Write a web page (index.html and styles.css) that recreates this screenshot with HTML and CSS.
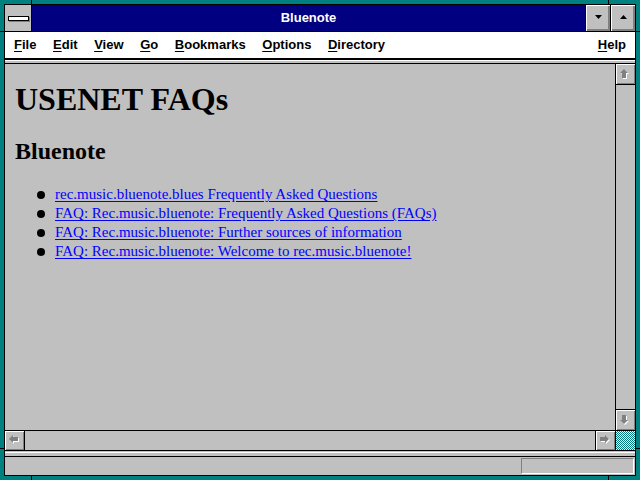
FILE: index.html
```html
<!DOCTYPE html>
<html>
<head>
<meta charset="utf-8">
<title>Bluenote</title>
<link rel="stylesheet" href="styles.css">
</head>
<body>
<div class="window">
  <div class="titlebar">
    <div class="sysbox"><span class="sysbar"></span></div>
    <div class="title">Bluenote</div>
    <div class="tbtn">
      <svg width="9" height="5" viewBox="0 0 9 5"><polygon points="1,0 8,0 4.5,4" fill="#000"/></svg>
    </div>
    <div class="tbtn">
      <svg width="9" height="5" viewBox="0 0 9 5"><polygon points="4.5,0 8,4 1,4" fill="#000"/></svg>
    </div>
  </div>
  <div class="menubar">
    <span class="mi"><u>F</u>ile</span>
    <span class="mi"><u>E</u>dit</span>
    <span class="mi"><u>V</u>iew</span>
    <span class="mi"><u>G</u>o</span>
    <span class="mi"><u>B</u>ookmarks</span>
    <span class="mi"><u>O</u>ptions</span>
    <span class="mi"><u>D</u>irectory</span>
    <span class="mi help"><u>H</u>elp</span>
  </div>
  <div class="sep"></div>
  <div class="main">
    <div class="content">
      <h1>USENET FAQs</h1>
      <h2>Bluenote</h2>
      <ul class="links">
        <li><a href="#">rec.music.bluenote.blues Frequently Asked Questions</a></li>
        <li><a href="#">FAQ: Rec.music.bluenote: Frequently Asked Questions (FAQs)</a></li>
        <li><a href="#">FAQ: Rec.music.bluenote: Further sources of information</a></li>
        <li><a href="#">FAQ: Rec.music.bluenote: Welcome to rec.music.bluenote!</a></li>
      </ul>
    </div>
    <div class="vscroll">
      <div class="sbtn vtop">
        <svg width="11" height="11" viewBox="0 0 11 11"><polygon points="5,1 9,5 7,5 7,10 3,10 3,5 1,5" fill="#fff"/><polygon points="4,0 8,4 6,4 6,9 2,9 2,4 0,4" fill="#808080"/></svg>
      </div>
      <div class="vtrack"></div>
      <div class="sbtn vbot">
        <svg width="11" height="11" viewBox="0 0 11 11"><polygon points="5,10 9,6 7,6 7,1 3,1 3,6 1,6" fill="#fff"/><polygon points="4,9 8,5 6,5 6,0 2,0 2,5 0,5" fill="#808080"/></svg>
      </div>
    </div>
  </div>
  <div class="hscroll">
    <div class="sbtn hleft">
      <svg width="11" height="11" viewBox="0 0 11 11"><polygon points="1,5 5,1 5,3 10,3 10,7 5,7 5,9" fill="#fff"/><polygon points="0,4 4,0 4,2 9,2 9,6 4,6 4,8" fill="#808080"/></svg>
    </div>
    <div class="htrack"></div>
    <div class="sbtn hright">
      <svg width="11" height="11" viewBox="0 0 11 11"><polygon points="10,5 6,1 6,3 1,3 1,7 6,7 6,9" fill="#fff"/><polygon points="9,4 5,0 5,2 0,2 0,6 5,6 5,8" fill="#808080"/></svg>
    </div>
    <div class="corner"></div>
  </div>
  <div class="sep2"></div>
  <div class="status">
    <div class="statbox"></div>
  </div>
</div>
<span class="tick tv t1"></span>
<span class="tick tv t2"></span>
<span class="tick tv t3"></span>
<span class="tick tv t4"></span>
<span class="tick th t5"></span>
<span class="tick th t6"></span>
<span class="tick th t7"></span>
<span class="tick th t8"></span>
</body>
</html>
```
FILE: styles.css
```css
html, body {
  margin: 0;
  padding: 0;
}
body {
  width: 640px;
  height: 480px;
  background: #008080;
  overflow: hidden;
  position: relative;
  font-family: "Liberation Sans", Arial, sans-serif;
}
.window {
  position: absolute;
  left: 4px;
  top: 4px;
  width: 630px;
  height: 470px;
  border: 1px solid #000;
  background: #c0c0c0;
  display: flex;
  flex-direction: column;
}
.titlebar {
  height: 26px;
  border-bottom: 1px solid #000;
  display: flex;
  flex: none;
}
.sysbox {
  width: 26px;
  border-right: 1px solid #000;
  background: #c0c0c0;
  display: flex;
  align-items: center;
  justify-content: center;
}
.sysbar {
  display: block;
  width: 19px;
  height: 3px;
  background: #fff;
  border: 1px solid #000;
  box-shadow: 1px 1px 0 #808080;
  margin-top: 1px;
}
.title {
  flex: 1;
  background: #000080;
  color: #fff;
  font-weight: bold;
  font-size: 13px;
  line-height: 26px;
  text-align: center;
}
.tbtn {
  width: 24px;
  border-left: 1px solid #000;
  background: #c0c0c0;
  box-shadow: inset 1px 1px 0 #fff, inset -2px -2px 0 #808080;
  display: flex;
  align-items: center;
  justify-content: center;
}
.tbtn svg { display: block; margin-top: -1px; }
.menubar {
  height: 26px;
  flex: none;
  background: #fff;
  border-bottom: 2px solid #000;
  display: flex;
  align-items: center;
  gap: 16.6px;
  padding: 0 9px;
  font-size: 13px;
  font-weight: bold;
  line-height: 26px;
  color: #000;
}
.mi u { text-underline-offset: 2px; }
.help { margin-left: auto; }
.sep {
  flex: none;
  height: 2px;
  border-top: 1px solid #fff;
  border-bottom: 1px solid #000;
  background: #c0c0c0;
}
.main {
  flex: 1;
  display: flex;
  min-height: 0;
}
.content {
  flex: 1;
  padding: 0 10px;
  overflow: hidden;
  font-family: "Liberation Serif", "Times New Roman", serif;
  color: #000;
}
.content h1 {
  margin: 17px 0 0;
  font-size: 32px;
  line-height: 37px;
  font-weight: bold;
}
.content h2 {
  margin: 19px 0 0;
  font-size: 24px;
  line-height: 28px;
  font-weight: bold;
}
.links {
  list-style: none;
  margin: 20px 0 0;
  padding: 0 0 0 22px;
  font-size: 15px;
  line-height: 19px;
}
.links li {
  display: flex;
}
.links li::before {
  content: "";
  flex: none;
  width: 8px;
  height: 8px;
  border-radius: 50%;
  background: #000;
  margin: 6px 10px 0 0;
}
.links a {
  color: #0000ff;
  text-decoration: underline;
  text-underline-offset: 2px;
}
.vscroll {
  width: 19px;
  border-left: 1px solid #000;
  display: flex;
  flex-direction: column;
}
.sbtn {
  background: #c0c0c0;
  box-shadow: inset 1px 1px 0 #fff, inset -1px -1px 0 #808080;
  display: flex;
  align-items: center;
  justify-content: center;
  flex: none;
}
.vtop { height: 20px; border-bottom: 1px solid #000; }
.vbot { height: 20px; border-top: 1px solid #000; }
.vtrack { flex: 1; background: #c0c0c0; }
.hscroll {
  flex: none;
  height: 19px;
  border-top: 1px solid #000;
  border-bottom: 1px solid #000;
  display: flex;
}
.hleft { width: 19px; border-right: 1px solid #000; }
.htrack { flex: 1; background: #c0c0c0; }
.hright { width: 19px; border-left: 1px solid #000; }
.corner {
  width: 19px;
  border-left: 1px solid #000;
  background: repeating-conic-gradient(#008080 0 25%, #ffffff 0 50%) 0 0 / 2px 2px;
}
.sep2 {
  flex: none;
  height: 5px;
  border-bottom: 1px solid #000;
  background: linear-gradient(#c0c0c0 0 1px, #fff 1px 2px, #c0c0c0 2px);
}
.status {
  flex: none;
  height: 18px;
  display: flex;
  justify-content: flex-end;
  align-items: center;
  padding-right: 1px;
}
.statbox {
  width: 111px;
  height: 14px;
  border-top: 1px solid #808080;
  border-left: 1px solid #808080;
  border-bottom: 1px solid #fff;
  border-right: 1px solid #fff;
}
.tick {
  position: absolute;
  background: #000;
}
.tv { width: 1px; height: 4px; }
.th { width: 4px; height: 1px; }
.t1 { left: 31px; top: 0; }
.t2 { left: 608px; top: 0; }
.t3 { left: 31px; top: 476px; }
.t4 { left: 608px; top: 476px; }
.t5 { left: 0; top: 31px; }
.t6 { left: 636px; top: 31px; }
.t7 { left: 0; top: 448px; }
.t8 { left: 636px; top: 448px; }
```
